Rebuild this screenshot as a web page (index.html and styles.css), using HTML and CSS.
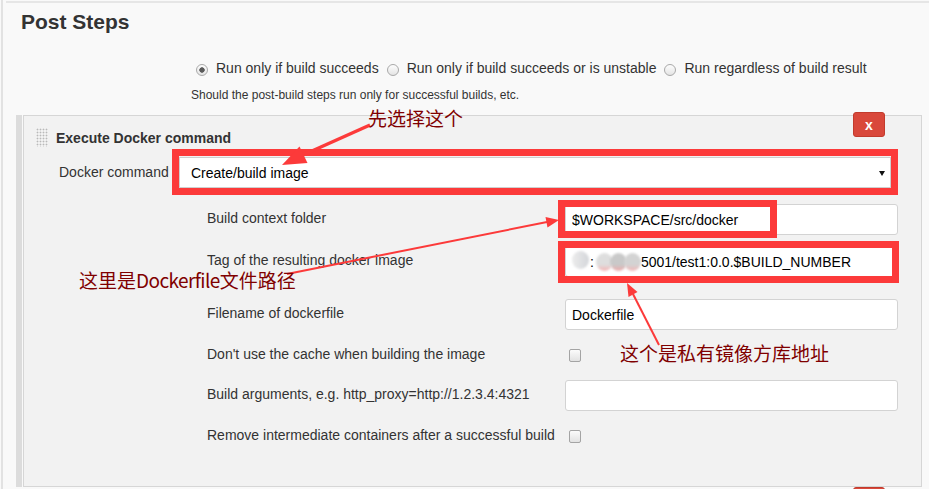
FILE: index.html
```html
<!DOCTYPE html>
<html lang="en">
<head>
    <meta charset="UTF-8">
    <meta name="viewport" content="width=device-width, initial-scale=1.0">
    <title>Post Steps</title>
    <link rel="stylesheet" href="styles.css">
</head>
<body>

    <div class="frame">
        <div class="section">
            <h2 class="section-title">Post Steps</h2>

            <div class="run-options">
                <label class="option"><input type="radio" name="run" checked>Run only if build succeeds</label>
                <label class="option"><input type="radio" name="run">Run only if build succeeds or is unstable</label>
                <label class="option"><input type="radio" name="run">Run regardless of build result</label>
            </div>
            <p class="run-help">Should the post-build steps run only for successful builds, etc.</p>

            <!-- Build step -->
            <div class="step">
                <div class="step-body">
                    <div class="step-head">
                        <span class="grip"></span>
                        <span class="step-title">Execute Docker command</span>
                    </div>
                    <button class="delete">x</button>

                    <div class="command-row">
                        <span class="command-label">Docker command</span>
                        <div class="select">Create/build image<span class="caret"></span></div>
                    </div>

                    <div class="fields">
                        <div class="field">
                            <span class="field-label">Build context folder</span>
                            <input class="text-input" type="text" value="$WORKSPACE/src/docker">
                        </div>
                        <div class="field field-tag">
                            <span class="field-label">Tag of the resulting docker image</span>
                            <div class="text-input">
                                <span class="blur blur-a"></span><span class="colon">:</span><span class="blur blur-b"></span><span class="blur blur-c"></span><span class="blur blur-d"></span>5001/test1:0.0.$BUILD_NUMBER
                            </div>
                        </div>
                        <div class="field">
                            <span class="field-label">Filename of dockerfile</span>
                            <input class="text-input" type="text" value="Dockerfile">
                        </div>
                        <div class="field field-check">
                            <span class="field-label">Don't use the cache when building the image</span>
                            <input class="check" type="checkbox">
                        </div>
                        <div class="field">
                            <span class="field-label">Build arguments, e.g. http_proxy=http://1.2.3.4:4321</span>
                            <input class="text-input" type="text" value="">
                        </div>
                        <div class="field field-check">
                            <span class="field-label">Remove intermediate containers after a successful build</span>
                            <input class="check" type="checkbox">
                        </div>
                    </div>
                </div>
            </div>

            <div class="step step-next">
                <div class="step-body">
                    <button class="delete" aria-label="Delete"></button>
                </div>
            </div>
        </div>
    </div>

    <!-- Screenshot annotations -->
    <div class="annotations">
        <svg class="marks" width="929" height="489" viewBox="0 0 929 489">
            <rect x="175.5" y="152.5" width="719" height="39" />
            <rect x="561.5" y="203.5" width="212" height="31" />
            <rect x="561.5" y="244.5" width="334" height="35" />

            <line class="thick" x1="370" y1="125" x2="303" y2="155" />
            <polygon points="282,165 307.5,163 299.5,146.5" />

            <line x1="287" y1="274" x2="547" y2="222" />
            <polygon points="559,220 547.5,227.5 545.5,217" />

            <line x1="659" y1="345" x2="633" y2="294" />
            <polygon points="627,283 637.5,292 628.5,297" />
        </svg>
        <span class="note note-select">先选择这个</span>
        <span class="note note-path">这里是<span class="note-latin">Dockerfile</span>文件路径</span>
        <span class="note note-registry">这个是私有镜像方库地址</span>
    </div>

</body>
</html>
```

FILE: styles.css
```css
* {
    margin: 0;
    padding: 0;
    box-sizing: border-box;
}

html, body {
    overflow: hidden;
}

body {
    background-color: #f9f9f9;
    font-family: "Liberation Sans", Arial, sans-serif;
    font-size: 14px;
    color: #333;
    width: 929px;
    height: 489px;
    position: relative;
}

.frame {
    margin-left: 1px;
    border-left: 2px solid #e2e2e2;
    min-height: 489px;
    padding-top: 1px;
}

.section {
    margin-left: 3px;
    border-top: 2px solid #e6e6e6;
}

.section-title {
    margin: 7px 0 0 15px;
    font-size: 21px;
    line-height: 24px;
    font-weight: bold;
    color: #333;
}

/* Run condition radios */
.run-options {
    display: flex;
    margin: 26px 0 0 190px;
    height: 16px;
    line-height: 16px;
}

.option {
    display: flex;
    align-items: flex-start;
    margin-right: 8px;
}

.option input {
    appearance: none;
    flex: none;
    width: 12px;
    height: 12px;
    margin: 4px 8px 0 0;
    border: 1px solid #a9a9a9;
    border-radius: 50%;
    background: linear-gradient(#fdfdfd, #e4e4e4);
}

.option input:checked {
    background: radial-gradient(circle, #5a5a5a 0 2.4px, transparent 3px), linear-gradient(#fdfdfd, #e4e4e4);
}

.run-help {
    margin: 12px 0 0 185px;
    font-size: 12px;
    line-height: 14px;
}

/* Step box */
.step {
    margin: 13px 7px 0 10px;
    border-left: 6px solid #dcdcdc;
    padding-left: 1px;
}

.step-body {
    position: relative;
    background-color: #f2f2f2;
    border: 1px solid #d6d6d6;
    padding: 12px 0 36px 12px;
}

.step-head {
    display: flex;
    align-items: center;
    height: 19px;
}

.grip {
    width: 12px;
    height: 19px;
    margin-right: 8px;
    background-image: radial-gradient(circle, #b9b9b9 0 0.8px, transparent 1.1px);
    background-size: 3px 3px;
}

.step-title {
    font-weight: bold;
    line-height: 16px;
}

.delete {
    position: absolute;
    top: -4px;
    right: 36px;
    width: 32px;
    height: 25px;
    border: 1px solid #c23b2d;
    border-radius: 3px;
    background: #d9483b;
    color: #fff;
    font-family: "Liberation Sans", Arial, sans-serif;
    font-size: 14px;
    font-weight: bold;
    line-height: 20px;
}

.command-row {
    display: grid;
    grid-template-columns: 120px 712px;
    align-items: center;
    margin: 10px 0 0 23px;
}

.command-label {
    margin-top: -2px;
}

.select {
    position: relative;
    height: 31px;
    padding: 7px 11px;
    background: #fff;
    border: 1px solid #cfcfcf;
    color: #000;
    line-height: 17px;
}

.caret {
    position: absolute;
    right: 5px;
    top: 13px;
    border-left: 3px solid transparent;
    border-right: 3px solid transparent;
    border-top: 5px solid #111;
}

/* Settings rows */
.fields {
    display: flex;
    flex-direction: column;
    gap: 11px;
    margin: 16px 0 0 171px;
}

.field {
    display: grid;
    grid-template-columns: 358px 333px;
    align-items: center;
    min-height: 31px;
}

.field-tag {
    margin-bottom: 11px;
}

.field-check {
    min-height: 28px;
}

.field-label {
    margin-top: -3px;
    line-height: 16px;
}

.text-input {
    display: flex;
    align-items: center;
    height: 31px;
    padding: 0 6px;
    background: #fff;
    border: 1px solid #d3d3d3;
    border-radius: 3px;
    font-family: "Liberation Sans", Arial, sans-serif;
    font-size: 14px;
    color: #000;
    white-space: nowrap;
}

.check {
    appearance: none;
    width: 12px;
    height: 13px;
    margin-left: 4px;
    border: 1px solid #a4a4a4;
    border-radius: 2px;
    background: linear-gradient(#fbfbfb, #e2e2e2);
}

/* Blurred registry address */
.blur {
    display: inline-block;
    flex: none;
    width: 17px;
    height: 18px;
    border-radius: 50%;
    filter: blur(0.8px);
    background: linear-gradient(#e4e4e4 60%, #f2c4c4);
}

.blur-a {
    background: linear-gradient(90deg, #ececec, #d4d6da);
    margin-top: -3px;
}

.colon {
    margin: 0 2px 0 1px;
}

.blur-b {
    background: linear-gradient(#dedede 65%, #f6b2b2);
}

.blur-c {
    margin-left: -3px;
    background: linear-gradient(#c9c9c9 65%, #f0aaaa);
}

.blur-d {
    margin: 0 0 0 -3px;
    background: linear-gradient(#d3d3d3 65%, #f4b6b6);
}

.step-next {
    margin-top: 3px;
}

.step-next .step-body {
    height: 40px;
}

/* Annotations */
.annotations {
    position: absolute;
    top: 0;
    left: 0;
    width: 929px;
    height: 489px;
    pointer-events: none;
}

.marks rect {
    fill: none;
    stroke: #fc3a3a;
    stroke-width: 7;
}

.marks line {
    stroke: #fc3a3a;
    stroke-width: 2;
}

.marks line.thick {
    stroke-width: 3.5;
}

.marks polygon {
    fill: #fc3a3a;
}

.note {
    position: absolute;
    font-family: "Noto Sans CJK SC", "Noto Sans", sans-serif;
    font-size: 19px;
    line-height: 1;
    color: #800000;
    white-space: nowrap;
}

.note-latin {
    letter-spacing: -0.6px;
}

.note-select {
    left: 368px;
    top: 108px;
}

.note-path {
    left: 79px;
    top: 270px;
}

.note-registry {
    left: 620px;
    top: 343px;
}
```
